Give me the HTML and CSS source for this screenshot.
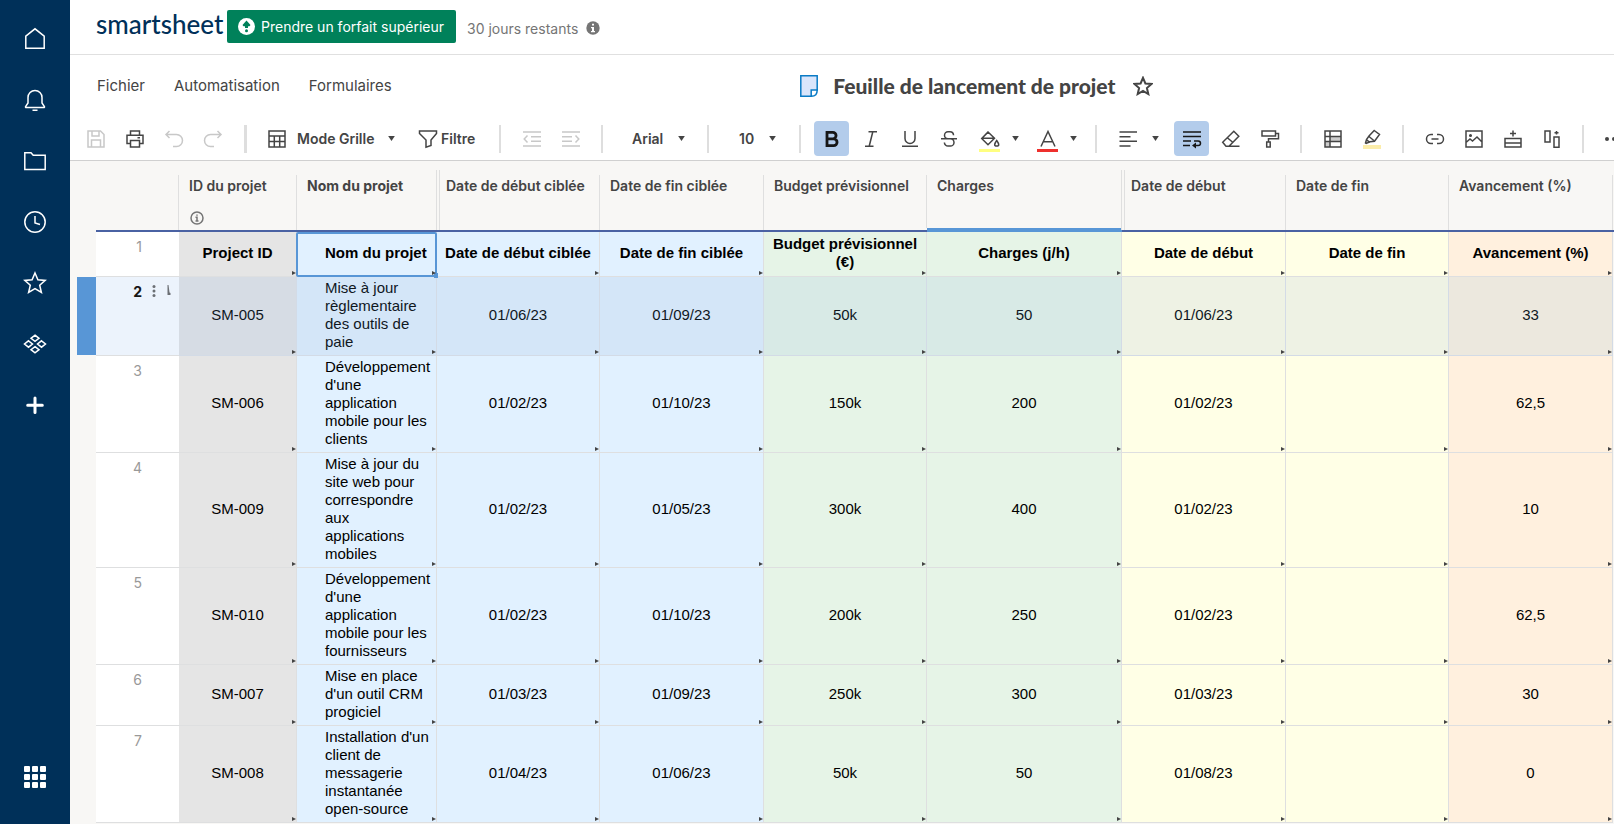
FILE: index.html
```html
<!DOCTYPE html>
<html lang="fr">
<head>
<meta charset="utf-8">
<title>Feuille de lancement de projet</title>
<link rel="stylesheet" href="styles.css">
</head>
<body>
<nav class="rail" aria-label="Navigation">
  <button class="rail-btn" aria-label="Accueil"><svg width="24" height="24" viewBox="0 0 24 24"><path d="M2.8 21.2V9.2L12 1.8l9.2 7.4v12z"/></svg></button>
  <button class="rail-btn" aria-label="Notifications"><svg width="24" height="24" viewBox="0 0 24 24"><path d="M5 15V9.500a7 7 0 0 1 14 0V15l2.400 3.500q.4 1-.7 1H3.300q-1.100 0-.7-1zM9.500 22.300h5"/></svg></button>
  <button class="rail-btn" aria-label="Parcourir"><svg width="24" height="24" viewBox="0 0 24 24"><path d="M1.800 20.500V3.800H8l2.200 2.500h12v14.200z"/></svg></button>
  <button class="rail-btn" aria-label="Récents"><svg width="24" height="24" viewBox="0 0 24 24"><circle cx="12" cy="12" r="10.200"/><path d="M12 6v7l5 1.500"/></svg></button>
  <button class="rail-btn" aria-label="Favoris"><svg width="24" height="24" viewBox="0 0 24 24"><path d="M12 2l2.900 6.800 7.300.6-5.500 4.800 1.700 7.300L12 17.600l-6.400 3.900 1.700-7.300-5.500-4.800 7.300-.6z"/></svg></button>
  <button class="rail-btn" aria-label="Modèles"><svg width="24" height="24" viewBox="0 0 24 24"><path d="M12 3.200l4 3.100-4 3.100-4-3.100zM12 14.600l4 3.100-4 3.100-4-3.100zM5.500 8.800L9.500 12l-4 3.200L1.500 12zM18.500 8.800l4 3.200-4 3.200-4-3.200z"/></svg></button>
  <button class="rail-btn" aria-label="Créer"><svg width="24" height="24" viewBox="0 0 24 24"><path stroke-width="3" stroke-linecap="round" d="M12 5v14.500M4.700 12.200h14.600"/></svg></button>
  <button class="rail-btn rail-last" aria-label="Applications"><svg width="24" height="24" viewBox="0 0 24 24"><g fill="#fff" stroke="none"><rect x="1" y="1" width="6" height="6" rx="1"/><rect x="9" y="1" width="6" height="6" rx="1"/><rect x="17" y="1" width="6" height="6" rx="1"/><rect x="1" y="9" width="6" height="6" rx="1"/><rect x="9" y="9" width="6" height="6" rx="1"/><rect x="17" y="9" width="6" height="6" rx="1"/><rect x="1" y="17" width="6" height="6" rx="1"/><rect x="9" y="17" width="6" height="6" rx="1"/><rect x="17" y="17" width="6" height="6" rx="1"/></g></svg></button>
</nav>

<main class="app">
  <header class="topbar">
    <a class="logo" href="#">smartsheet</a>
    <button class="upgrade"><svg width="17" height="17" viewBox="0 0 17 17"><circle cx="8.500" cy="8.500" r="8.500" fill="#fff"/><path d="M8.500 2.500l4 4.500-1 1.200H10V10H7V8.200H5.500l-1-1.200z" fill="#00815a"/><circle cx="8.500" cy="12.700" r="1.500" fill="#00815a"/></svg>Prendre un forfait supérieur</button>
    <span class="trial">30 jours restants</span>
    <svg class="trial-info" width="14" height="14" viewBox="0 0 14 14"><circle cx="7" cy="7" r="6.700" fill="#757575"/><path d="M6 2.700h2v1.800H6zM5 6h3v4h1v1.200H5V10h1V7.200H5z" fill="#fff"/></svg>
  </header>

  <div class="titlebar">
    <nav class="menu" aria-label="Menu">
      <button>Fichier</button><button>Automatisation</button><button>Formulaires</button>
    </nav>
    <div class="title">
      <svg width="18" height="22" viewBox="0 0 18 22"><path d="M.8.800h16.400V15l-6 6.200H.8z" fill="#d9e5fb" stroke="#0a7bc6" stroke-width="1.500"/><path d="M17.200 15h-6v6.200q3.200 0 4.600-1.500t1.400-4.700z" fill="#fff" stroke="#0a7bc6" stroke-width="1.500"/></svg>
      <h1>Feuille de lancement de projet</h1>
      <button class="fav" aria-label="Ajouter aux favoris"><svg width="20" height="20" viewBox="0 0 20 20"><path d="M10 1.800l2.400 5.700 6.100.5-4.600 4 1.400 6-5.300-3.200L4.700 18l1.400-6-4.600-4 6.100-.5z"/></svg></button>
    </div>
  </div>

  <div class="toolbar" role="toolbar" aria-label="Mise en forme">
    <div class="group first">
      <button class="tool off" aria-label="Enregistrer"><svg viewBox="0 0 20 20"><path d="M2 2h12.500L18 5.500V18H2zM6 2v5h7V2M5.500 18v-7h9v7"/></svg></button>
      <button class="tool" aria-label="Imprimer"><svg viewBox="0 0 20 20"><path d="M5.500 6V2h9v4M5.500 14.500H2V6.200h16v8.300h-3.500M5.500 11.500h9V18h-9zM12.500 8.800h2.500"/></svg></button>
      <button class="tool off" aria-label="Annuler"><svg viewBox="0 0 20 20"><path d="M5.500 2L2 5.500 5.500 9M2 5.500h10.500a6 6 0 0 1 0 12H9"/></svg></button>
      <button class="tool off" aria-label="Rétablir"><svg viewBox="0 0 20 20"><path d="M14.500 2L18 5.500 14.500 9M18 5.500H7.500a6 6 0 0 0 0 12H11"/></svg></button>
    </div>
    <div class="group views">
      <button class="view-btn"><svg viewBox="0 0 20 20"><path d="M2 2h16v16H2zM2 7h16M2 12.500h16M7.300 7v11M12.700 7v11"/></svg><span class="view-name">Mode Grille</span><svg class="caret" viewBox="0 0 8 6"><path d="M0 0h8L4 6z"/></svg></button>
      <button class="filter-btn"><svg viewBox="0 0 20 20"><path d="M1.500 2h17v2.500L13 11v5.500L8 18.200V11L1.500 4.500z"/></svg>Filtre</button>
    </div>
    <div class="group">
      <button class="tool off" aria-label="Diminuer le retrait"><svg viewBox="0 0 20 20"><path d="M1 3h18M9 7.700h10M9 12.300h10M1 17h18M5.500 6.500L2.200 10l3.300 3.500"/></svg></button>
      <button class="tool off" aria-label="Augmenter le retrait"><svg viewBox="0 0 20 20"><path d="M1 3h18M1 7.700h10M1 12.300h10M1 17h18M14.500 6.500l3.300 3.500-3.300 3.500"/></svg></button>
    </div>
    <div class="group">
      <span class="picker font-picker"><select aria-label="Police"><option>Arial</option></select><svg class="caret" viewBox="0 0 8 6"><path d="M0 0h8L4 6z"/></svg></span>
    </div>
    <div class="group">
      <span class="picker size-picker"><select aria-label="Taille"><option>10</option></select><svg class="caret" viewBox="0 0 8 6"><path d="M0 0h8L4 6z"/></svg></span>
    </div>
    <div class="group">
      <button class="tool on" aria-label="Gras"><svg viewBox="0 0 20 20"><path stroke-width="2.800" d="M5 3.300h5.800a3.200 3.200 0 0 1 0 6.500H5zM5 9.800h6.600a3.400 3.400 0 0 1 0 6.900H5z"/></svg></button>
      <button class="tool" aria-label="Italique"><svg viewBox="0 0 20 20"><path d="M7.500 2.800H16M4 17.200h8.500M11.800 2.800L8.200 17.200"/></svg></button>
      <button class="tool" aria-label="Souligné"><svg viewBox="0 0 20 20"><path d="M5 2v7.500a5 5 0 0 0 10 0V2M2 17.300h16"/></svg></button>
      <button class="tool" aria-label="Barré"><svg viewBox="0 0 20 20"><path d="M14.500 6.200V6a3.500 3.500 0 0 0-3.500-3.300H9a3.500 3.500 0 0 0 0 7h2.300a3.700 3.700 0 0 1 0 7.400H9a3.600 3.600 0 0 1-3.600-3.600M2 9.800h16"/></svg></button>
      <button class="tool split" aria-label="Couleur de fond"><span class="swatch yellow"><svg viewBox="0 0 20 20"><path d="M7.500 2.500l7 6.800-6.500 6.500L1.700 9.500l6.500-6.600M1.700 9.300h12.800M16.700 11.500q-4 5.500 0 5.500t0-5.500z"/></svg></span><svg class="caret" viewBox="0 0 8 6"><path d="M0 0h8L4 6z"/></svg></button>
      <button class="tool split" aria-label="Couleur du texte"><span class="swatch red"><svg viewBox="0 0 20 20"><path d="M3 17.500L10 2.500l7 15M5.700 12.800h8.600"/></svg></span><svg class="caret" viewBox="0 0 8 6"><path d="M0 0h8L4 6z"/></svg></button>
    </div>
    <div class="group">
      <button class="tool split align" aria-label="Alignement"><svg viewBox="0 0 20 20"><path d="M1.500 3H19M1.500 7.700h11M1.500 12.300H19M1.500 17h11"/></svg><svg class="caret" viewBox="0 0 8 6"><path d="M0 0h8L4 6z"/></svg></button>
      <button class="tool on" aria-label="Retour à la ligne"><svg viewBox="0 0 20 20"><path d="M1 3h18M1 7.500h18M1 12h8M1 16.500h7M12 12h4.200a2.300 2.300 0 0 1 0 4.600H12"/><path d="M14 13.500v6l-4-3z" fill="currentColor" stroke="none"/></svg></button>
      <button class="tool" aria-label="Effacer la mise en forme"><svg viewBox="0 0 20 20"><path d="M12.800 2.200l5 5L8 17.300H5l-3.300-4zM6 8.500l6 5M7 17.300h11.500"/></svg></button>
      <button class="tool" aria-label="Reproduire la mise en forme"><svg viewBox="0 0 20 20"><path d="M2 2h13.500v5H2zM15.500 4.500H18.500V9.800H8.500V13M6.700 13h3.500v5H6.700z"/></svg></button>
    </div>
    <div class="group">
      <button class="tool" aria-label="Mise en forme conditionnelle"><svg viewBox="0 0 20 20"><path d="M7 7.500h11v5H7z" fill="#ccc" stroke="none"/><path d="M2 12.500h5V18H2z" fill="#ccc" stroke="none"/><path d="M2 2h16v16H2zM2 7.500h16M2 12.500h16M7 2v16"/></svg></button>
      <button class="tool" aria-label="Surligner les modifications"><svg viewBox="0 0 20 20"><path d="M1 16h18v4H1z" fill="#fcedaa" stroke="none"/><path d="M12.200 1.500l5.300 4-5 6.800L8 12.800 4.200 14.500 3.500 14l1-3.500 2.500-3.500zM7 7.500l4.800 4M4.500 10.800l3.500 2.500"/></svg></button>
    </div>
    <div class="group">
      <button class="tool" aria-label="Lien"><svg viewBox="0 0 20 20"><path d="M8 5.500H6a4.500 4.500 0 0 0 0 9h2M12 5.500h2a4.500 4.500 0 0 1 0 9h-2M6.500 10h7"/></svg></button>
      <button class="tool" aria-label="Image"><svg viewBox="0 0 20 20"><path d="M2 2h16v16H2zM2 13.500l4-3.500 2.500 2L13 8l5 5"/><circle cx="6.500" cy="6.500" r=".8"/></svg></button>
      <button class="tool" aria-label="Insérer une ligne"><svg viewBox="0 0 20 20"><path d="M2 9.500h16V18H2zM2 14h16M10 1.500v6M7 4.500h6"/></svg></button>
      <button class="tool" aria-label="Insérer une colonne"><svg viewBox="0 0 20 20"><path d="M3 2h5v11H3zM12 8h5v10.200h-5zM12.500 3.800h4M14.500 2v3.500"/></svg></button>
    </div>
    <div class="group">
      <button class="tool more" aria-label="Plus"><svg viewBox="0 0 20 20"><g fill="currentColor" stroke="none"><circle cx="2" cy="10" r="2"/><circle cx="9" cy="10" r="2"/><circle cx="16" cy="10" r="2"/></g></svg></button>
    </div>
  </div>

  <div class="sheet">
    <table>
      <colgroup><col class="w-gutter"><col class="w-num"><col class="w-id"><col class="w-name"><col class="w-std"><col class="w-wide"><col class="w-std"><col class="w-load"><col class="w-wide"><col class="w-std"><col class="w-wide"><col class="w-wide"></colgroup>
      <thead>
        <tr>
          <td class="gutter"></td>
          <td class="corner"></td>
          <th scope="col"><div>ID du projet<svg class="col-info" width="14" height="14" viewBox="0 0 14 14"><circle cx="7" cy="7" r="6"/><path d="M5.500 6.200H7V10M5.500 10h3M7 3.500v1.300"/></svg></div></th>
          <th scope="col" class="primary"><div>Nom du projet</div></th>
          <th scope="col" class="frozen"><div>Date de début ciblée</div></th>
          <th scope="col"><div>Date de fin ciblée</div></th>
          <th scope="col"><div>Budget prévisionnel</div></th>
          <th scope="col" class="active"><div>Charges</div></th>
          <th scope="col" class="frozen"><div>Date de début</div></th>
          <th scope="col"><div>Date de fin</div></th>
          <th scope="col"><div>Avancement (%)</div></th>
          <th scope="col"><div></div></th>
        </tr>
      </thead>
      <tbody>
        <tr class="head"><td class="gutter"></td><th scope="row">1</th><td class="c-id">Project ID</td><td class="c-blue name current">Nom du projet<span class="handle"></span></td><td class="c-blue">Date de début ciblée</td><td class="c-blue">Date de fin ciblée</td><td class="c-green">Budget prévisionnel (€)</td><td class="c-green">Charges (j/h)</td><td class="c-yellow">Date de début</td><td class="c-yellow">Date de fin</td><td class="c-orange">Avancement (%)</td><td></td></tr>
        <tr class="selected"><td class="gutter"></td><th scope="row">2<svg class="row-tools" width="20" height="14" viewBox="0 0 20 14"><circle cx="2" cy="2.500" r="1.500"/><circle cx="2" cy="7" r="1.500"/><circle cx="2" cy="11.500" r="1.500"/><path d="M15.500 1h1l1 7.500 1 .5v2h-3z"/></svg></th><td class="c-id">SM-005</td><td class="c-blue name">Mise à jour règlementaire des outils de paie</td><td class="c-blue">01/06/23</td><td class="c-blue">01/09/23</td><td class="c-green">50k</td><td class="c-green">50</td><td class="c-yellow">01/06/23</td><td class="c-yellow"></td><td class="c-orange">33</td><td></td></tr>
        <tr><td class="gutter"></td><th scope="row">3</th><td class="c-id">SM-006</td><td class="c-blue name">Développement d'une application mobile pour les clients</td><td class="c-blue">01/02/23</td><td class="c-blue">01/10/23</td><td class="c-green">150k</td><td class="c-green">200</td><td class="c-yellow">01/02/23</td><td class="c-yellow"></td><td class="c-orange">62,5</td><td></td></tr>
        <tr><td class="gutter"></td><th scope="row">4</th><td class="c-id">SM-009</td><td class="c-blue name">Mise à jour du site web pour correspondre aux applications mobiles</td><td class="c-blue">01/02/23</td><td class="c-blue">01/05/23</td><td class="c-green">300k</td><td class="c-green">400</td><td class="c-yellow">01/02/23</td><td class="c-yellow"></td><td class="c-orange">10</td><td></td></tr>
        <tr><td class="gutter"></td><th scope="row">5</th><td class="c-id">SM-010</td><td class="c-blue name">Développement d'une application mobile pour les fournisseurs</td><td class="c-blue">01/02/23</td><td class="c-blue">01/10/23</td><td class="c-green">200k</td><td class="c-green">250</td><td class="c-yellow">01/02/23</td><td class="c-yellow"></td><td class="c-orange">62,5</td><td></td></tr>
        <tr><td class="gutter"></td><th scope="row">6</th><td class="c-id">SM-007</td><td class="c-blue name">Mise en place d'un outil CRM progiciel</td><td class="c-blue">01/03/23</td><td class="c-blue">01/09/23</td><td class="c-green">250k</td><td class="c-green">300</td><td class="c-yellow">01/03/23</td><td class="c-yellow"></td><td class="c-orange">30</td><td></td></tr>
        <tr><td class="gutter"></td><th scope="row">7</th><td class="c-id">SM-008</td><td class="c-blue name">Installation d'un client de messagerie instantanée open-source</td><td class="c-blue">01/04/23</td><td class="c-blue">01/06/23</td><td class="c-green">50k</td><td class="c-green">50</td><td class="c-yellow">01/08/23</td><td class="c-yellow"></td><td class="c-orange">0</td><td></td></tr>
      </tbody>
    </table>
  </div>
</main>
</body>
</html>
```
FILE: styles.css
```css
* { box-sizing: border-box; }

body {
  margin: 0;
  height: 100vh;
  display: flex;
  overflow: hidden;
  background: #fff;
  color: #444;
  font-family: Inter, "Liberation Sans", sans-serif;
  font-size: 14px;
}

button, select {
  margin: 0;
  padding: 0;
  border: 0;
  background: none;
  color: inherit;
  font: inherit;
}

svg { flex: none; fill: none; stroke: currentColor; stroke-width: 1.5; }

/* Left rail */
.rail {
  flex: none;
  width: 70px;
  padding: 8px 0 17px;
  display: flex;
  flex-direction: column;
  background: #003059;
  color: #fff;
}
.rail-btn {
  height: 61px;
  display: flex;
  align-items: center;
  justify-content: center;
}
.rail-last { margin-top: auto; }

.app {
  flex: 1;
  min-width: 0;
  display: flex;
  flex-direction: column;
}

/* Top bar */
.topbar {
  height: 55px;
  flex: none;
  display: flex;
  align-items: center;
  padding: 0 26px 2px;
  border-bottom: 1px solid #e0e0e0;
}
.logo {
  width: 131px;
  color: #003059;
  font: 500 26px/32px Lato, sans-serif;
  text-decoration: none;
  padding-bottom: 4px;
}
.upgrade {
  height: 33px;
  padding: 0 12px 0 11px;
  display: flex;
  align-items: center;
  gap: 6px;
  border-radius: 2px;
  background: #00815a;
  color: #fff;
}
.upgrade svg, .trial-info { stroke: none; }
.trial { margin: 4px 8px 0 11px; color: #757575; }
.trial-info { margin-top: 3px; }

/* Menu and sheet title */
.titlebar {
  height: 62px;
  flex: none;
  display: flex;
  align-items: center;
  padding: 0 52px 0 27px;
}
.menu { display: flex; gap: 29px; padding-bottom: 2px; font-size: 15px; }
.title {
  flex: 1;
  display: flex;
  align-items: center;
  justify-content: center;
  gap: 15px;
}
h1 { margin: 0; font: 900 21px/28px Lato, sans-serif; }
.fav { display: flex; margin-left: 3px; }
.fav svg { stroke-width: 2; }

/* Toolbar */
.toolbar {
  flex: none;
  display: flex;
  padding: 4px 0;
  border-bottom: 1px solid #d0d0d0;
  overflow: hidden;
}
.group {
  flex: none;
  display: flex;
  align-items: center;
  gap: 4px;
  padding-right: 13px;
  font-weight: 600;
}
.group + .group::before {
  content: "";
  width: 2px;
  height: 28px;
  margin-right: 9px;
  background: #dedede;
}
.group + .views::before { width: 3px; margin-right: 4px; }
.first { padding: 0 14px 0 8px; }
.tool {
  width: 35px;
  height: 35px;
  display: flex;
  align-items: center;
  justify-content: center;
  border-radius: 4px;
}
.tool svg, .view-btn svg, .filter-btn svg { width: 20px; height: 20px; }
.off { color: #c8c8c8; }
.on { background: #b3cceb; color: #161616; }
svg.caret, .tool svg.caret, .view-btn svg.caret {
  width: 7px;
  height: 5px;
  fill: #444;
  stroke: none;
}
.views { padding-right: 16px; gap: 9px; }
.view-btn, .filter-btn {
  height: 35px;
  padding: 0 7px;
  display: flex;
  align-items: center;
}
.view-btn { gap: 10px; }
.view-name { width: 81px; text-align: left; }
.filter-btn { gap: 3px; width: 72px; }
.picker { display: grid; align-items: center; height: 35px; }
.picker > * { grid-area: 1 / 1; }
.picker select { appearance: none; width: 100%; height: 35px; }
.picker .caret { justify-self: end; pointer-events: none; }
.font-picker { width: 69px; margin-right: 9px; }
.font-picker select { padding-left: 16px; }
.size-picker { width: 54px; margin-right: 10px; }
.size-picker select { padding-left: 17px; }
.split { width: 54px; gap: 12px; justify-content: flex-start; padding-left: 9px; }
.align { width: 60px; gap: 14px; padding-left: 8px; }
.swatch { display: flex; justify-content: center; width: 21px; padding-top: 4px; border-bottom: 3px solid; }
.swatch svg { color: #444; }
.yellow { border-color: #ffff80; }
.red { border-color: #ee302d; }
.more { justify-content: flex-start; padding-left: 8px; }

/* Grid */
.sheet { flex: 1; overflow: hidden; background: #f8f7f5; }
table {
  width: max-content;
  table-layout: fixed;
  border-collapse: separate;
  border-spacing: 0;
  font: 15px/18px "Liberation Sans", Arial, sans-serif;
  color: #000;
}
.w-gutter { width: 26px; }
.w-num { width: 83px; }
.w-id { width: 118px; }
.w-name { width: 140px; }
.w-std { width: 163px; }
.w-wide { width: 164px; }
.w-load { width: 195px; }

thead th, .corner {
  height: 71px;
  padding: 14px 0 0;
  border-bottom: 2px solid #4a62a3;
}
thead div {
  height: 55px;
  margin-left: -1px;
  padding: 1px 10px;
  border-left: 1px solid #dfdfdf;
  color: #444;
  font: 600 14px/20px Inter, sans-serif;
  text-align: left;
}
thead .primary div { font-weight: 700; }
thead .frozen { padding-top: 9px; }
thead .frozen div {
  height: 60px;
  padding-top: 6px;
  border-left: 4px double #dfdfdf;
  padding-left: 6px;
}
thead .active { border-bottom: 4px solid #5896d6; }
thead .active div { height: 53px; }
.col-info { display: block; margin: 15px 0 0 1px; stroke: #757575; }

tbody td {
  position: relative;
  padding: 2px 4px 4px;
  border-right: 1px solid #dedfe0;
  border-bottom: 1px solid #dedfe0;
  text-align: center;
  vertical-align: middle;
}
tbody td.gutter, tbody td:last-child { border-color: transparent; }
tbody td.gutter { border-right: 0; }
tbody .name { padding-left: 28px; text-align: left; }
tbody th {
  padding: 6px 37px 0 0;
  border-bottom: 1px solid #dedfe0;
  background: #fff;
  color: #999;
  font: 14px/18px Inter, sans-serif;
  text-align: right;
  vertical-align: top;
  position: relative;
}
.head { height: 45px; font-weight: 700; }
.c-id { background: #e5e5e5; }
.c-blue { background: #e1f1ff; }
.c-green { background: #e6f4e7; }
.c-yellow { background: #ffffe6; }
.c-orange { background: #fff0de; }

/* Marker in the cell corner */
tbody td[class^="c-"]::after {
  content: "";
  position: absolute;
  right: 0;
  bottom: 1px;
  border-left: 4px solid #444;
  border-top: 2px solid transparent;
  border-bottom: 2px solid transparent;
}

.selected { color: #10181f; }
.selected .c-id { background: #d6dce4; }
.selected .c-blue { background: #d4e6f8; }
.selected .c-green { background: #d8eae6; }
.selected .c-yellow { background: #eef2e4; }
.selected .c-orange { background: #ece8de; }
.selected td { border-color: #d3dbe6; }
.selected th { background: #ecf3fc; color: #161616; font-weight: 700; }
.selected .gutter {
  background: linear-gradient(#5896d6, #5896d6) right / 19px 100% no-repeat;
}
.row-tools {
  position: absolute;
  left: 56px;
  top: 7px;
  fill: #6b6f74;
  stroke: none;
}

/* Active cell outline and its fill handle */
tbody .current { z-index: 1; }
.current::before {
  content: "";
  position: absolute;
  inset: 0 -1px -1px -1px;
  border: 2px solid #5896d6;
  border-radius: 2px;
}
.handle {
  position: absolute;
  right: -2px;
  bottom: -2px;
  width: 4px;
  height: 5px;
  background: #5896d6;
}
```
